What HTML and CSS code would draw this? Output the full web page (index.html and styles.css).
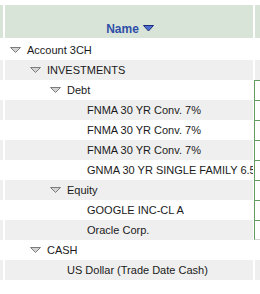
FILE: index.html
```html
<!DOCTYPE html>
<html lang="en">
<head>
    <meta charset="UTF-8">
    <title>Holdings</title>
    <link rel="stylesheet" href="styles.css">
</head>
<body>

    <div class="grid">
        <div class="row head">
            <div class="side"></div>
            <div class="main name-col">
                <span>Name</span>
                <svg class="sort" width="11" height="7" viewBox="0 0 11 7"><polygon points="0.5,0.5 10.5,0.5 5.5,6" fill="#4f6fd0" stroke="#1c2c78" stroke-width="1"/></svg>
            </div>
            <div class="side"></div>
        </div>

        <div class="row">
            <div class="side"></div>
            <div class="main lvl-0"><svg class="tw" width="11" height="6" viewBox="0 0 11 6"><polygon points="0.5,0.5 10.5,0.5 5.5,5.5" fill="#d4d4d4" stroke="#7c7c7c"/></svg>Account 3CH</div>
            <div class="side"></div>
        </div>
        <div class="row alt">
            <div class="side"></div>
            <div class="main lvl-1"><svg class="tw" width="11" height="6" viewBox="0 0 11 6"><polygon points="0.5,0.5 10.5,0.5 5.5,5.5" fill="#d4d4d4" stroke="#7c7c7c"/></svg>INVESTMENTS</div>
            <div class="side"></div>
        </div>
        <div class="row">
            <div class="side"></div>
            <div class="main lvl-2"><svg class="tw" width="11" height="6" viewBox="0 0 11 6"><polygon points="0.5,0.5 10.5,0.5 5.5,5.5" fill="#d4d4d4" stroke="#7c7c7c"/></svg>Debt</div>
            <div class="side box"></div>
        </div>
        <div class="row alt">
            <div class="side"></div>
            <div class="main leaf-3">FNMA 30 YR Conv. 7%</div>
            <div class="side box"></div>
        </div>
        <div class="row">
            <div class="side"></div>
            <div class="main leaf-3">FNMA 30 YR Conv. 7%</div>
            <div class="side box"></div>
        </div>
        <div class="row alt">
            <div class="side"></div>
            <div class="main leaf-3">FNMA 30 YR Conv. 7%</div>
            <div class="side box"></div>
        </div>
        <div class="row">
            <div class="side"></div>
            <div class="main leaf-3">GNMA 30 YR SINGLE FAMILY 6.5</div>
            <div class="side box"></div>
        </div>
        <div class="row alt">
            <div class="side"></div>
            <div class="main lvl-2"><svg class="tw" width="11" height="6" viewBox="0 0 11 6"><polygon points="0.5,0.5 10.5,0.5 5.5,5.5" fill="#d4d4d4" stroke="#7c7c7c"/></svg>Equity</div>
            <div class="side box"></div>
        </div>
        <div class="row">
            <div class="side"></div>
            <div class="main leaf-3">GOOGLE INC-CL A</div>
            <div class="side box"></div>
        </div>
        <div class="row alt">
            <div class="side"></div>
            <div class="main leaf-3">Oracle Corp.</div>
            <div class="side box last"></div>
        </div>
        <div class="row">
            <div class="side"></div>
            <div class="main lvl-1"><svg class="tw" width="11" height="6" viewBox="0 0 11 6"><polygon points="0.5,0.5 10.5,0.5 5.5,5.5" fill="#d4d4d4" stroke="#7c7c7c"/></svg>CASH</div>
            <div class="side"></div>
        </div>
        <div class="row alt">
            <div class="side"></div>
            <div class="main leaf-2">US Dollar (Trade Date Cash)</div>
            <div class="side"></div>
        </div>
    </div>

</body>
</html>
```

FILE: styles.css
```css
* {
    margin: 0;
    padding: 0;
    box-sizing: border-box;
}
body {
    background: white;
    font-family: "Liberation Sans", Arial, sans-serif;
    font-size: 11px;
    color: #1a1a1a;
    overflow: hidden;
}
.grid {
    padding-top: 5px;
}
.row {
    display: grid;
    grid-template-columns: 3px 248px 5px;
    column-gap: 2px;
    height: 20px;
}
.row.alt .side,
.row.alt .main {
    background: #efefef;
}
.main {
    display: flex;
    align-items: center;
    white-space: nowrap;
    overflow: hidden;
}
.head {
    height: 33px;
    margin-bottom: 2px;
}
.head .side,
.head .main {
    background: #d9e4d9;
}
.name-col {
    justify-content: center;
    align-items: flex-end;
    padding-bottom: 2px;
    padding-left: 2px;
    font-size: 12px;
    font-weight: bold;
    color: #2f4fa8;
}
.sort {
    margin-left: 4px;
    margin-bottom: 4px;
}
.tw {
    margin-right: 6px;
    flex-shrink: 0;
}
.lvl-0 { padding-left: 5px; }
.lvl-1 { padding-left: 25px; }
.lvl-2 { padding-left: 45px; }
.leaf-2 { padding-left: 62px; }
.leaf-3 { padding-left: 82px; }
.row .side.box {
    background: white;
    border-left: 1px solid #639c63;
    border-top: 1px solid #639c63;
    margin-left: -1px;
}
.row .side.box.last {
    border-bottom: 1px solid #d4d4d4;
}
```
